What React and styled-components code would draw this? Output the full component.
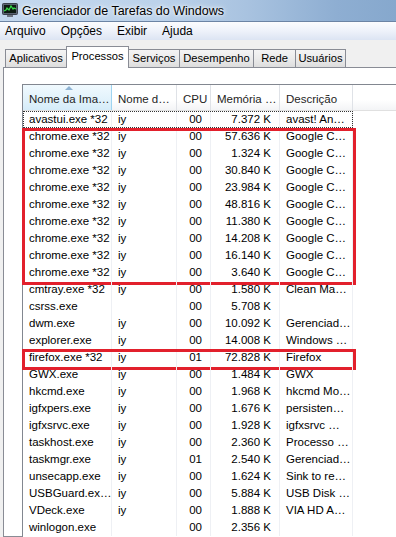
import React from "react";
import styled, { createGlobalStyle, css } from "styled-components";

const GlobalStyle = createGlobalStyle`
  html, body { margin: 0; padding: 0; background: #f0f0f0; }
  body { font-family: "Liberation Sans", Arial, sans-serif; font-size: 11.5px; color: #000; }
`;

const COLS = "89px 65px 34px 69px 73px 1fr";

const processes = [
  ["avastui.exe *32", "iy", "00", "7.372 K", "avast! An…", "focus"],
  ["chrome.exe *32", "iy", "00", "57.636 K", "Google C…", "chrome"],
  ["chrome.exe *32", "iy", "00", "1.324 K", "Google C…", "chrome"],
  ["chrome.exe *32", "iy", "00", "30.840 K", "Google C…", "chrome"],
  ["chrome.exe *32", "iy", "00", "23.984 K", "Google C…", "chrome"],
  ["chrome.exe *32", "iy", "00", "48.816 K", "Google C…", "chrome"],
  ["chrome.exe *32", "iy", "00", "11.380 K", "Google C…", "chrome"],
  ["chrome.exe *32", "iy", "00", "14.208 K", "Google C…", "chrome"],
  ["chrome.exe *32", "iy", "00", "16.140 K", "Google C…", "chrome"],
  ["chrome.exe *32", "iy", "00", "3.640 K", "Google C…", "chrome"],
  ["cmtray.exe *32", "iy", "00", "1.580 K", "Clean Ma…"],
  ["csrss.exe", "", "00", "5.708 K", ""],
  ["dwm.exe", "iy", "00", "10.092 K", "Gerenciad…"],
  ["explorer.exe", "iy", "00", "14.008 K", "Windows …"],
  ["firefox.exe *32", "iy", "01", "72.828 K", "Firefox", "firefox"],
  ["GWX.exe", "iy", "00", "1.484 K", "GWX"],
  ["hkcmd.exe", "iy", "00", "1.968 K", "hkcmd Mo…"],
  ["igfxpers.exe", "iy", "00", "1.676 K", "persisten…"],
  ["igfxsrvc.exe", "iy", "00", "1.928 K", "igfxsrvc …"],
  ["taskhost.exe", "iy", "00", "2.360 K", "Processo …"],
  ["taskmgr.exe", "iy", "01", "2.540 K", "Gerenciad…"],
  ["unsecapp.exe", "iy", "00", "1.624 K", "Sink to re…"],
  ["USBGuard.ex…", "iy", "00", "5.884 K", "USB Disk …"],
  ["VDeck.exe", "iy", "00", "1.888 K", "VIA HD A…"],
  ["winlogon.exe", "", "00", "2.356 K", ""],
];

const tabs = ["Aplicativos", "Processos", "Serviços", "Desempenho", "Rede", "Usuários"];
const tabWidths = [62, 63, 52, 75, 43, 51];

const Window = styled.div`
  width: 396px;
  height: 537px;
  overflow: hidden;
  display: flex;
  flex-direction: column;
`;

const TitleBar = styled.div`
  height: 21px;
  display: flex;
  align-items: center;
  gap: 4px;
  padding-left: 2px;
  background: linear-gradient(to right, #c3d8ee 0%, #bcd2ea 40%, #a9c3e0 62%, #8eaed2 85%, #86a8cd 100%);
  font-size: 12.5px;
  text-shadow: 0 0 6px #fff, 0 0 3px #fff;
`;

const MenuBar = styled.div`
  height: 18px;
  display: flex;
  align-items: center;
  padding-left: 5px;
  border-top: 1px solid #6c84a4;
  background: linear-gradient(to bottom, #fbfcfe 0%, #eef2fa 50%, #dce4f3 100%);
  font-size: 12px;
`;

const MenuItem = styled.span`
  margin-right: 15px;
`;

const TabStrip = styled.div`
  height: 27px;
  display: flex;
  align-items: flex-end;
  padding-left: 5px;
`;

const Tab = styled.div`
  position: relative;
  box-sizing: border-box;
  height: 18px;
  margin-right: -1px;
  border: 1px solid #898c95;
  border-bottom: none;
  background: linear-gradient(to bottom, #f4f4f4 0%, #ebebeb 50%, #dddddd 100%);
  font-size: 11.2px;
  text-align: center;
  line-height: 17px;
  white-space: nowrap;

  ${(p) =>
    p.$active &&
    css`
      height: 22px;
      margin-bottom: -1px;
      z-index: 1;
      background: #fff;
      line-height: 19px;
    `}
`;

const TabPanel = styled.div`
  flex: 1;
  margin-left: 3px;
  width: 420px;
  border: 1px solid #898c95;
  background: #fff;
  padding: 16px 0 0 18px;
`;

const ListView = styled.div`
  width: 420px;
  height: 100%;
  border-top: 1px solid #828790;
  border-left: 1px solid #828790;
  background: #fff;
`;

const HeaderRow = styled.div`
  display: grid;
  grid-template-columns: ${COLS};
  height: 25px;
  border-bottom: 1px solid #e0e0e0;
`;

const HeaderCell = styled.div`
  position: relative;
  display: flex;
  align-items: center;
  padding: 2px 0 0 6px;
  border-right: 1px solid #dfe2e7;
  background: linear-gradient(to bottom, #ffffff 0%, #ffffff 60%, #f3f4f6 100%);
  color: #1e1e1e;
  white-space: nowrap;
  overflow: hidden;

  ${(p) =>
    p.$sorted &&
    css`
      background: linear-gradient(to bottom, #f0f9fe 0%, #e1f2fb 60%, #d5ecf9 100%);
      border-right-color: #9fd4f0;
    `}
`;

const SortArrow = styled.span`
  position: absolute;
  top: 1px;
  left: 42px;
  width: 0;
  height: 0;
  border-left: 4px solid transparent;
  border-right: 4px solid transparent;
  border-bottom: 4px solid #8fb3d3;
`;

const Group = styled.div`
  position: relative;

  &::after {
    content: "";
    position: absolute;
    top: 0;
    left: -1px;
    width: 334px;
    bottom: -4px;
    box-sizing: border-box;
    border: 3px solid #e2202c;
    pointer-events: none;
  }
`;

const Row = styled.div`
  position: relative;
  display: grid;
  grid-template-columns: ${COLS};
  height: 17px;
  line-height: 17px;

  ${(p) =>
    p.$focus &&
    css`
      &::after {
        content: "";
        position: absolute;
        inset: 0 auto 0 0;
        width: 330px;
        box-sizing: border-box;
        border: 1px dotted #333;
      }
    `}
`;

const Cell = styled.div`
  padding: 0 ${(p) => (p.$right ? "8px" : "0")} 0 ${(p) => (p.$right ? "0" : "6px")};
  text-align: ${(p) => (p.$right ? "right" : "left")};
  border-right: 1px solid #eef0f4;
  white-space: nowrap;
  overflow: hidden;
`;

const AppIcon = () => (
  <svg width="16" height="15" viewBox="0 0 16 15">
    <rect x="0.5" y="0.5" width="15" height="11" rx="1" fill="#5a6472" stroke="#3a414c" />
    <rect x="2" y="2" width="12" height="8" fill="#0c1a12" />
    <polyline points="2,8 4,7 5,5 7,7 9,3 11,6 12,5 14,6" fill="none" stroke="#35e04a" strokeWidth="1.2" />
    <rect x="5" y="12" width="6" height="2" fill="#6c7480" />
  </svg>
);

const ProcessRow = ({ p, focus }) => (
  <Row $focus={focus}>
    <Cell>{p[0]}</Cell>
    <Cell>{p[1]}</Cell>
    <Cell $right>{p[2]}</Cell>
    <Cell $right>{p[3]}</Cell>
    <Cell>{p[4]}</Cell>
    <Cell />
  </Row>
);

const App = () => {
  const blocks = [];
  processes.forEach((p) => {
    const last = blocks[blocks.length - 1];
    if (p[5] && p[5] !== "focus" && last && last.key === p[5]) {
      last.rows.push(p);
    } else {
      blocks.push({ key: p[5] || null, rows: [p] });
    }
  });

  return (
    <>
      <GlobalStyle />
      <Window>
        <TitleBar>
          <AppIcon />
          <span>Gerenciador de Tarefas do Windows</span>
        </TitleBar>
        <MenuBar>
          {["Arquivo", "Opções", "Exibir", "Ajuda"].map((m) => (
            <MenuItem key={m}>{m}</MenuItem>
          ))}
        </MenuBar>
        <TabStrip>
          {tabs.map((t, i) => (
            <Tab key={t} $active={t === "Processos"} style={{ width: tabWidths[i] }}>
              {t}
            </Tab>
          ))}
        </TabStrip>
        <TabPanel>
          <ListView>
            <HeaderRow>
              <HeaderCell $sorted>
                <SortArrow />
                Nome da Ima…
              </HeaderCell>
              <HeaderCell>Nome d…</HeaderCell>
              <HeaderCell>CPU</HeaderCell>
              <HeaderCell>Memória …</HeaderCell>
              <HeaderCell>Descrição</HeaderCell>
              <HeaderCell />
            </HeaderRow>
            {blocks.map((b, i) => {
              const rows = b.rows.map((p, j) => (
                <ProcessRow key={j} p={p} focus={p[5] === "focus"} />
              ));
              return b.key && b.key !== "focus" ? (
                <Group key={i}>{rows}</Group>
              ) : (
                <React.Fragment key={i}>{rows}</React.Fragment>
              );
            })}
          </ListView>
        </TabPanel>
      </Window>
    </>
  );
};

export default App;
